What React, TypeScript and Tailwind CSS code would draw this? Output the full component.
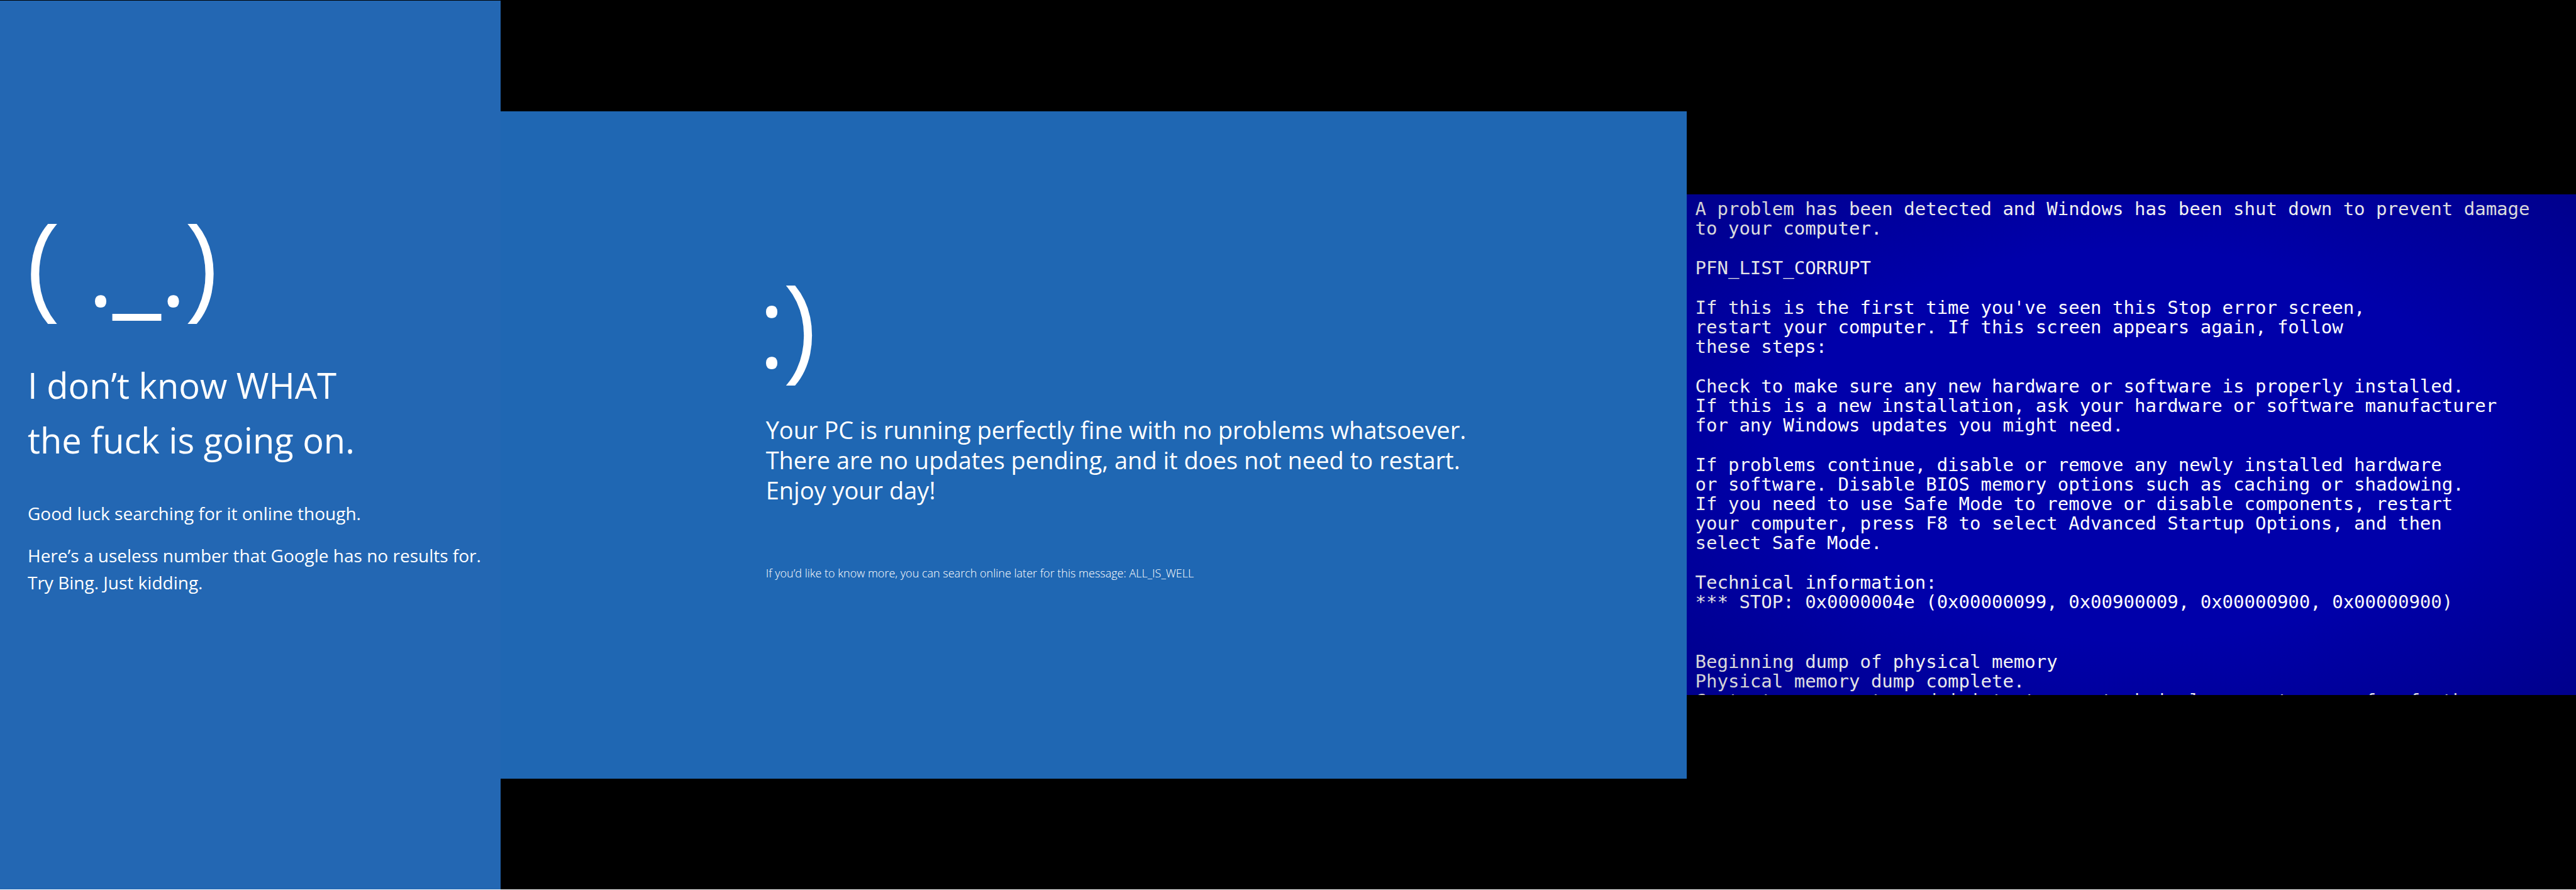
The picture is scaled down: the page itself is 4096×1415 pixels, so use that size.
import type { ReactNode } from "react";

const stopScreen: string[][] = [
  [
    "A problem has been detected and Windows has been shut down to prevent damage",
    "to your computer.",
  ],
  ["PFN_LIST_CORRUPT"],
  [
    "If this is the first time you've seen this Stop error screen,",
    "restart your computer. If this screen appears again, follow",
    "these steps:",
  ],
  [
    "Check to make sure any new hardware or software is properly installed.",
    "If this is a new installation, ask your hardware or software manufacturer",
    "for any Windows updates you might need.",
  ],
  [
    "If problems continue, disable or remove any newly installed hardware",
    "or software. Disable BIOS memory options such as caching or shadowing.",
    "If you need to use Safe Mode to remove or disable components, restart",
    "your computer, press F8 to select Advanced Startup Options, and then",
    "select Safe Mode.",
  ],
  [
    "Technical information:",
    "*** STOP: 0x0000004e (0x00000099, 0x00900009, 0x00000900, 0x00000900)",
  ],
];

const dumpLog: string[] = [
  "Beginning dump of physical memory",
  "Physical memory dump complete.",
  "Contact your system administrator or technical support group for further",
];

function Block({ lines }: { lines: string[] }) {
  return (
    <p className="whitespace-pre">
      {lines.map((line) => (
        <span key={line} className="block">
          {line}
        </span>
      ))}
    </p>
  );
}

function Face({ children }: { children: ReactNode }) {
  return (
    <p className="whitespace-pre text-[178px] leading-[178px] font-light [-webkit-text-stroke:4px_white]">
      {children}
    </p>
  );
}

function ConfusedScreen() {
  return (
    <section className="aspect-9/16 border-t border-black bg-[#2367b3] pt-[326px] pl-11 font-['Open_Sans',sans-serif] text-white">
      <Face>( ._.)</Face>
      <h1 className="mt-16 text-[56px] leading-[87px]">
        I don’t know WHAT
        <br />
        the fuck is going on.
      </h1>
      <div className="mt-[52px] flex flex-col gap-6 text-[28px] leading-[43px]">
        <p>Good luck searching for it online though.</p>
        <p>
          Here’s a useless number that Google has no results for.
          <br />
          Try Bing. Just kidding.
        </p>
      </div>
    </section>
  );
}

function HappyScreen() {
  return (
    <section className="aspect-video bg-[#1f67b3] pt-[248px] pl-[410px] font-['Open_Sans',sans-serif] text-white">
      <Face>:)</Face>
      <div className="mt-14 flex flex-col gap-24 pl-3">
        <h2 className="text-[38px] leading-12">
          Your PC is running perfectly fine with no problems whatsoever.
          <br />
          There are no updates pending, and it does not need to restart.
          <br />
          Enjoy your day!
        </h2>
        <p className="text-[18px] leading-6 font-light">
          If you’d like to know more, you can search online later for this message: ALL_IS_WELL
        </p>
      </div>
    </section>
  );
}

function StopScreen() {
  return (
    <section className="relative aspect-video overflow-hidden bg-[#0000aa] pt-2 pl-3.5 font-['DejaVu_Sans_Mono',monospace] text-[29px] leading-[31px] text-white">
      <div className="flex flex-col gap-8">
        {stopScreen.map((lines) => (
          <Block key={lines[0]} lines={lines} />
        ))}
        <div className="pt-8">
          <Block lines={dumpLog} />
        </div>
      </div>
      {/* Monitor vignette */}
      <div className="pointer-events-none absolute inset-0 bg-[radial-gradient(ellipse_at_center,transparent_55%,rgba(0,0,20,0.2)_100%)]" />
    </section>
  );
}

export default function App() {
  return (
    <main className="grid grid-cols-[minmax(0,27fr)_minmax(0,64fr)_minmax(0,48fr)] items-center bg-black">
      <ConfusedScreen />
      <HappyScreen />
      <StopScreen />
    </main>
  );
}
